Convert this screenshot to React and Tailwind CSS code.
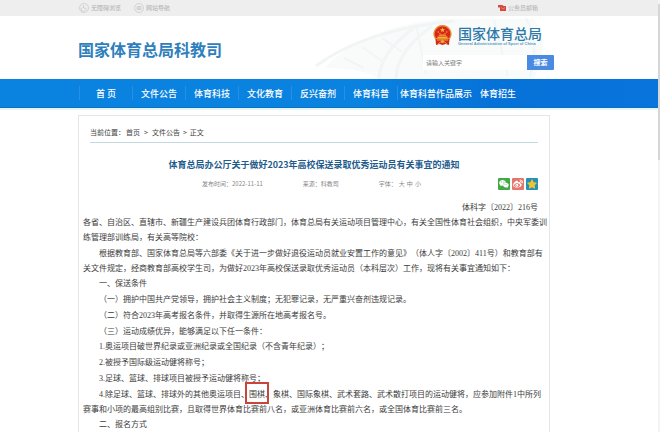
import { FaWeixin, FaWeibo, FaStar } from "react-icons/fa";

const navItems = ["首 页", "文件公告", "体育科技", "文化教育", "反兴奋剂", "体育科普"];

const Emblem = () => (
  <svg viewBox="0 0 38 42" className="h-[21px] w-[19px]" aria-hidden="true">
    <path d="M19 0a18 18 0 0 1 15 28l-5 3H9l-5-3A18 18 0 0 1 19 0z" fill="#e58a2a" />
    <path d="M19 3a15 15 0 0 1 13 23H6A15 15 0 0 1 19 3z" fill="#d8261b" />
    <path
      d="M19 5l1.4 3.2 3.5.3-2.7 2.3.9 3.4-3.1-1.8-3.1 1.8.9-3.4-2.7-2.3 3.5-.3z"
      fill="#f5b740"
    />
    <circle cx="10.5" cy="14" r="1.3" fill="#f5b740" />
    <circle cx="14" cy="17" r="1.2" fill="#f5b740" />
    <circle cx="24" cy="17" r="1.2" fill="#f5b740" />
    <circle cx="27.5" cy="14" r="1.3" fill="#f5b740" />
    <path d="M13 19h12l2 2.5H11zM9 23h20v3.5H9z" fill="#f3b03a" />
    <path d="M5 28l10 1h8l10-1-1 12-7-2-6 2-6-2-7 2z" fill="#d3291d" />
    <path d="M8 30h22M10 38l5-4h8l5 4" stroke="#f0b03c" strokeWidth="1.8" fill="none" />
    <circle cx="19" cy="33" r="3" fill="#f0b03c" />
  </svg>
);

const TopBar = () => (
  <div className="flex h-4 items-center bg-[#eeeeee] pl-[79px] pr-[120px] text-[6px] leading-none text-[#b0b0b0]">
    <a href="#" className="flex items-center gap-[2px]">
      <svg viewBox="0 0 20 20" className="h-[10px] w-[10px]" fill="none" stroke="#cccccc" strokeWidth="1.6">
        <circle cx="10" cy="10" r="9" />
        <path d="M9 4v6h4l2 5M7 9a4 4 0 1 0 5 5" />
      </svg>
      无障碍浏览
    </a>
    <a href="#" className="ml-[13px] flex items-center gap-[2px]">
      <svg viewBox="0 0 20 20" className="h-[10px] w-[10px]" fill="none" stroke="#cccccc" strokeWidth="1.6">
        <circle cx="10" cy="10" r="9" />
        <path d="M6 7h8v6H6zM6 10h8M10 7v6" />
      </svg>
      网站导航
    </a>
    <a href="#" className="ml-auto flex items-center gap-[2px]">
      <svg viewBox="0 0 16 12" className="h-[6px] w-[8px]">
        <path d="M0 0h9l2 2h5v10H4V5H0z" fill="#d94a3e" />
        <path d="M7 5l3 3 4-3" stroke="#f3b5ae" fill="none" />
      </svg>
      公务员邮箱
    </a>
  </div>
);

// faint stadium drawing behind the header
const Stadium = () => (
  <svg
    viewBox="0 0 250 63"
    className="absolute bottom-0 right-[104px] h-[63px] w-[250px]"
    fill="none"
    stroke="#f1f5f5"
    aria-hidden="true"
  >
    <path d="M20 52Q60 10 140 3l90 0q18 20 0 60H75Q60 52 20 52z" fill="#f9fbfb" stroke="none" />
    <path d="M12 50Q60 14 150 5M75 63Q76 36 110 12M92 63Q92 36 128 10" strokeWidth="3" />
    <path d="M40 42l20 10M58 31l20 14M78 22l20 14M112 8l10 50M190 4l14 56M222 2q14 28 4 58" strokeWidth="2" />
  </svg>
);

const Header = () => (
  <header className="relative flex h-[63px] items-start bg-white pl-[78px] pr-[104px]">
    <Stadium />
    <h1 className="pt-[21px] text-[16px] font-bold leading-[24px] text-[#2f7fbd]">
      国家体育总局科教司
    </h1>
    <div className="relative ml-auto flex flex-col">
      <a href="#" className="mt-2 flex items-center gap-[6px] pl-[10px]">
        <Emblem />
        <span className="flex flex-col text-[#2c78a8]">
          <span className="text-[14px] font-medium leading-[18px]">国家体育总局</span>
          <span className="font-['Liberation_Sans'] text-[4px] font-bold leading-[4px] text-[#5b9cc0]">
            General Administration of Sport of China
          </span>
        </span>
      </a>
      <form className="mt-[9px] flex h-[15px]">
        <input
          type="text"
          aria-label="请输入关键字"
          placeholder="请输入关键字"
          className="w-[104px] bg-white px-[3px] text-[6px] leading-none outline-none placeholder:text-[#777777]"
        />
        <button
          type="button"
          className="w-[27px] rounded-r-[1px] bg-[#4a8be2] text-[7px] font-bold leading-none text-white"
        >
          搜索
        </button>
      </form>
    </div>
  </header>
);

const Nav = () => (
  <nav className="flex h-[29px] items-center border-b border-[#0b6fc4] bg-gradient-to-r from-[#0a82e0] from-55% via-[#0672d8] via-75% to-[#0874dc] pl-[79px] text-[9px] font-medium leading-none text-white">
    {navItems.map((item) => (
      <a
        key={item}
        href="#"
        className="flex h-[14px] w-[53px] items-center justify-center border-l border-[#2790e4]"
      >
        {item}
      </a>
    ))}
    <a href="#" className="flex h-[14px] items-center border-l border-[#2790e4] pl-[2px]">
      体育科普作品展示
    </a>
    <a href="#" className="ml-2">
      体育招生
    </a>
  </nav>
);

const ArticleHead = () => (
  <div className="px-[11px]">
    <div className="flex h-[27px] items-end border-b border-[#c3dbe0] pb-[5px] text-[7px] leading-[9px] text-[#444444]">
      <span>当前位置：</span>
      <a href="#" className="pl-px">首页</a>
      <span className="px-1">&gt;</span>
      <a href="#">文件公告</a>
      <span className="px-[3px]">&gt;</span>
      <span>正文</span>
    </div>
    <h2 className="mt-[15px] text-center text-[9px] font-bold leading-[13px] text-[#1f5c8c]">
      体育总局办公厅关于做好2023年高校保送录取优秀运动员有关事宜的通知
    </h2>
    <div className="mt-[7px] flex h-3 items-center pl-[112px] text-[6px] leading-none text-[#888888]">
      <span>发布时间：2022-11-11</span>
      <span className="ml-10">来源：科教司</span>
      <span className="ml-10 flex gap-[2px]">
        字体：
        <button type="button">大</button>
        <button type="button">中</button>
        <button type="button">小</button>
      </span>
      <span className="ml-auto flex gap-[2px]">
        <a href="#" aria-label="微信" className="flex size-3 items-center justify-center rounded-[1px] bg-[#43a947]">
          <FaWeixin className="size-[10px] text-white" />
        </a>
        <a href="#" aria-label="微博" className="flex size-3 items-center justify-center rounded-[1px] bg-[#e4766c]">
          <FaWeibo className="size-[10px] text-white" />
        </a>
        <a href="#" aria-label="QQ空间" className="flex size-3 items-center justify-center rounded-[1px] bg-[#2492b8]">
          <FaStar className="size-[10px] text-[#f3c32f]" />
        </a>
      </span>
    </div>
  </div>
);

const ArticleBody = () => (
  <div className="mt-[10px] pl-1 pr-px font-['Liberation_Serif','Noto_Sans_CJK_SC',sans-serif] text-[8px] leading-[15px] text-[#3c3c3c] [text-spacing-trim:space-all]">
    <p className="pr-[10px] text-right">体科字〔2022〕216号</p>
    <div className="space-y-px">
      <p>
        各省、自治区、直辖市、新疆生产建设兵团体育行政部门，体育总局有关运动项目管理中心，有关全国性体育社会组织，中央军委训练管理部训练局，有关高等院校：
      </p>
      <p className="indent-4">
        根据教育部、国家体育总局等六部委《关于进一步做好退役运动员就业安置工作的意见》（体人字〔2002〕411号）和教育部有关文件规定，经商教育部高校学生司，为做好2023年高校保送录取优秀运动员（本科层次）工作，现将有关事宜通知如下：
      </p>
    </div>
    <div className="space-y-px">
      <p className="indent-4">一、保送条件</p>
      <p className="indent-4">（一）拥护中国共产党领导，拥护社会主义制度；无犯罪记录，无严重兴奋剂违规记录。</p>
      <p className="indent-4">（二）符合2023年高考报名条件，并取得生源所在地高考报名号。</p>
      <p className="indent-4">（三）运动成绩优异，能够满足以下任一条件：</p>
    </div>
    <div className="space-y-px">
      <p className="indent-4">1.奥运项目破世界纪录或亚洲纪录或全国纪录（不含青年纪录）；</p>
      <p className="indent-4">2.被授予国际级运动健将称号；</p>
      <p className="indent-4">3.足球、篮球、排球项目被授予运动健将称号；</p>
      <p className="indent-4">
        4.除足球、篮球、排球外的其他奥运项目、
        <span className="relative">
          围棋
          <span className="absolute -inset-x-1 -bottom-[5px] -top-2 border-2 border-[#c9453c]" />
        </span>
        、象棋、国际象棋、武术套路、武术散打项目的运动健将，应参加附件1中所列赛事和小项的最高组别比赛，且取得世界体育比赛前八名，或亚洲体育比赛前六名，或全国体育比赛前三名。
      </p>
    </div>
    <p className="indent-4">二、报名方式</p>
  </div>
);

export default function App() {
  return (
    <div className="flex min-h-screen bg-white font-['Noto_Sans_CJK_SC',sans-serif]">
      <div className="flex min-w-0 flex-1 flex-col">
        <TopBar />
        <Header />
        <Nav />
        <main className="flex flex-1 flex-col border-t-2 border-[#e3f5f5] pl-[78px] pr-[108px] pt-[5px]">
          <article className="flex-1 border-x border-t border-[#e6e6e6]">
            <ArticleHead />
            <ArticleBody />
          </article>
        </main>
      </div>
      <div className="w-[2px] bg-[#f3f3f3]">
        <div className="mt-1 h-[156px] bg-[#d6d6d6]" />
      </div>
    </div>
  );
}
